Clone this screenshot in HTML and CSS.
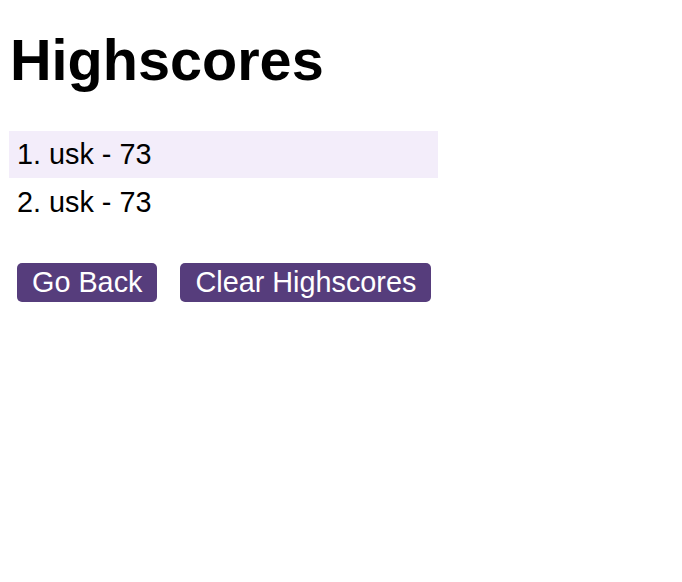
FILE: index.html
```html
<!DOCTYPE html>
<html lang="en">
<head>
<meta charset="utf-8">
<title>Highscores</title>
<link rel="stylesheet" href="styles.css">
</head>
<body>
<div class="page">
  <h1 class="title">Highscores</h1>
  <ol class="scores">
    <li class="score score-odd">1. usk - 73</li>
    <li class="score">2. usk - 73</li>
  </ol>
  <div class="actions">
    <button class="btn">Go Back</button>
    <button class="btn">Clear Highscores</button>
  </div>
</div>
</body>
</html>
```

FILE: styles.css
```css
html, body {
  margin: 0;
  padding: 0;
  background: #ffffff;
}

body {
  font-family: "Liberation Sans", Arial, sans-serif;
  color: #000000;
}

.page {
  padding: 8px;
}

.title {
  font-size: 57.6px;
  font-weight: bold;
  line-height: normal;
  margin: 19px 0 37.6px 2px;
}

.scores {
  list-style: none;
  margin: 0 0 37px 1px;
  padding: 0;
  width: 429px;
}

.score {
  font-size: 28.8px;
  line-height: normal;
  padding: 7.5px 8px 7px;
}

.score-odd {
  background: #f3edfa;
}

.actions {
  display: flex;
  gap: 23px;
  padding-left: 9px;
}

.btn {
  font-family: "Liberation Sans", Arial, sans-serif;
  font-size: 28.8px;
  line-height: normal;
  color: #ffffff;
  background: #563d7c;
  border: none;
  border-radius: 5px;
  padding: 3px 15px;
  margin: 0;
  cursor: pointer;
}
```
